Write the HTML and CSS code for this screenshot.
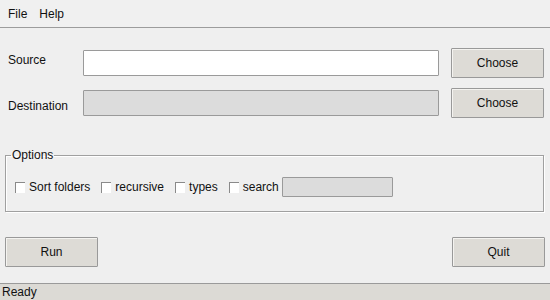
FILE: index.html
```html
<!DOCTYPE html>
<html lang="en">
<head>
    <meta charset="UTF-8">
    <title>Folder Tool</title>
    <link rel="stylesheet" href="styles.css">
</head>
<body>
    <div class="menubar">
        <span class="menu-item">File</span>
        <span class="menu-item">Help</span>
    </div>

    <div class="form">
        <label class="label label-source">Source</label>
        <input class="entry" type="text">
        <button class="btn">Choose</button>

        <label class="label label-dest">Destination</label>
        <input class="entry" type="text" disabled>
        <button class="btn">Choose</button>
    </div>

    <fieldset class="options">
        <legend>Options</legend>
        <div class="option-row">
            <label class="check"><span class="box"></span>Sort folders</label>
            <label class="check"><span class="box"></span>recursive</label>
            <label class="check"><span class="box"></span>types</label>
            <label class="check search"><span class="box"></span>search</label>
            <input class="entry small" type="text" disabled>
        </div>
    </fieldset>

    <div class="actions">
        <button class="btn">Run</button>
        <button class="btn">Quit</button>
    </div>

    <div class="statusbar">Ready</div>
</body>
</html>
```

FILE: styles.css
```css
body {
    margin: 0;
    width: 550px;
    height: 300px;
    background: #efefef;
    font-family: "Liberation Sans", Arial, sans-serif;
    font-size: 12px;
    color: #111;
    display: flex;
    flex-direction: column;
    overflow: hidden;
}
.menubar {
    height: 27px;
    border-bottom: 1px solid #9c9c9c;
    display: flex;
    align-items: center;
    padding-left: 2px;
    background: #f0f0f0;
}
.menu-item {
    padding: 0 6px;
}
.form {
    display: grid;
    grid-template-columns: 63px 356px 93px;
    grid-template-rows: 30px 30px;
    column-gap: 12px;
    row-gap: 10px;
    margin-top: 20px;
    padding-left: 8px;
    align-items: center;
}
.label-source {
    margin-bottom: 6px;
}
.label-dest {
    margin-top: 5px;
}
.entry {
    box-sizing: border-box;
    height: 26px;
    border: 1px solid #9a9a9a;
    border-radius: 1px;
    background: #fff;
    margin: 0;
    padding: 0 4px;
    font: inherit;
}
.entry:disabled {
    background: #dcdcdc;
}
.btn {
    box-sizing: border-box;
    height: 30px;
    width: 93px;
    margin: 0;
    background: #dddbd6;
    border: 1px solid #999;
    border-radius: 1px;
    box-shadow: inset 1px 1px 0 #f4f3f0;
    font: inherit;
    color: #111;
}
.options {
    margin: 30px 6px 0 5px;
    padding: 15px 8px 14px 9px;
    border: 1px solid #a0a0a0;
    box-shadow: 1px 1px 0 #fff, inset 1px 1px 0 #fff;
}
.options legend {
    padding: 0 1px;
    margin-left: -4px;
}
.option-row {
    display: flex;
    align-items: center;
    height: 20px;
}
.check {
    display: flex;
    align-items: center;
    margin-right: 11px;
}
.check.search {
    margin-right: 3px;
}
.box {
    box-sizing: border-box;
    width: 10px;
    height: 11px;
    background: #fff;
    border-top: 1px solid #8a8a8a;
    border-left: 1px solid #8a8a8a;
    margin-right: 4px;
}
.entry.small {
    width: 111px;
    height: 20px;
}
.actions {
    display: flex;
    justify-content: space-between;
    margin: 25px 5px 0 5px;
}
.statusbar {
    margin-top: auto;
    height: 16px;
    line-height: 16px;
    border-top: 1px solid #9a9a9a;
    background: #dcdad5;
    padding-left: 2px;
}
```
